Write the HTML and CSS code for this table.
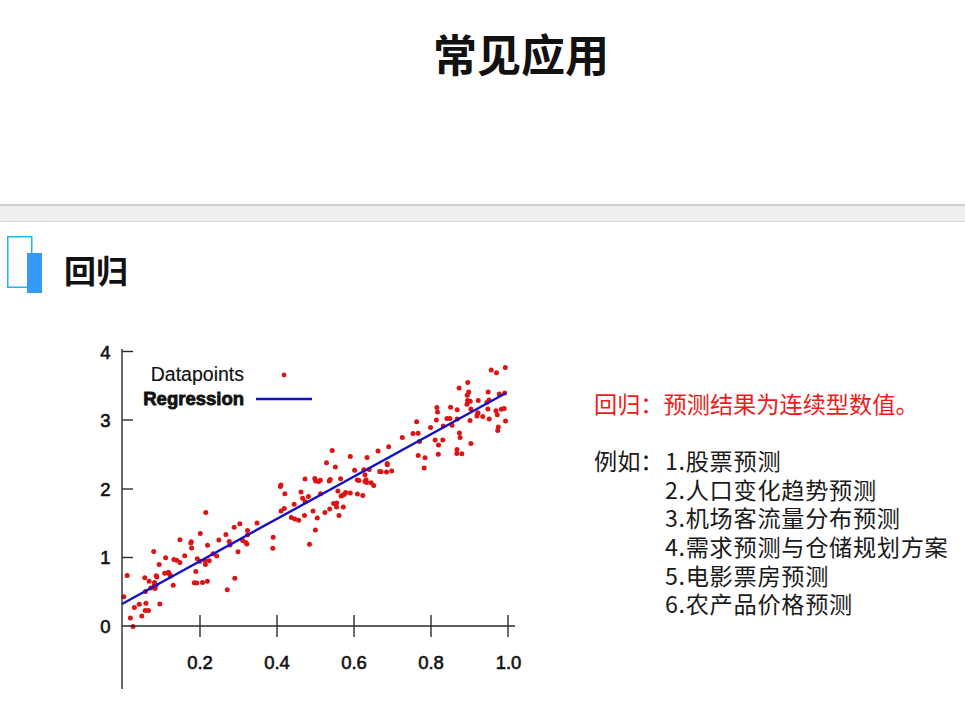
FILE: index.html
```html
<!DOCTYPE html>
<html lang="zh-CN">
<head>
<meta charset="utf-8">
<title>常见应用</title>
<link rel="stylesheet" href="styles.css">
</head>
<body>
<header class="top">
  <h1 class="title">常见应用</h1>
</header>
<div class="band"></div>
<main class="content">
  <div class="section-head">
    <svg class="sec-icon" width="40" height="62" viewBox="0 0 40 62">
      <rect x="2.75" y="2.75" width="24" height="50.5" fill="none" stroke="#22b4e6" stroke-width="1.5"/>
      <rect x="22" y="19" width="15" height="40" fill="#3399fb"/>
    </svg>
    <h2 class="sec-title">回归</h2>
  </div>
  <div class="row">
    <svg class="chart" width="450" height="370" viewBox="90 330 450 370">
      <g id="pts" fill="#dc1414"></g>
      <line x1="122" y1="604" x2="506" y2="393" stroke="#1212c4" stroke-width="2.4"/>
      <g stroke="#2a2a2a" stroke-width="1.4">
        <line x1="122" y1="349" x2="122" y2="689"/>
        <line x1="122" y1="626" x2="515" y2="626"/>
        <line x1="122" y1="351.5" x2="133" y2="351.5"/>
        <line x1="122" y1="420" x2="133" y2="420"/>
        <line x1="122" y1="489" x2="133" y2="489"/>
        <line x1="122" y1="557.5" x2="133" y2="557.5"/>
        <line x1="200" y1="615" x2="200" y2="637"/>
        <line x1="277" y1="615" x2="277" y2="637"/>
        <line x1="354" y1="615" x2="354" y2="637"/>
        <line x1="431" y1="615" x2="431" y2="637"/>
        <line x1="508" y1="615" x2="508" y2="637"/>
      </g>
      <g class="tick" text-anchor="middle">
        <text x="105.5" y="359">4</text>
        <text x="105.5" y="426.5">3</text>
        <text x="105.5" y="495.5">2</text>
        <text x="105.5" y="564">1</text>
        <text x="105.5" y="633">0</text>
        <text x="200" y="668.5">0.2</text>
        <text x="277" y="668.5">0.4</text>
        <text x="354" y="668.5">0.6</text>
        <text x="431" y="668.5">0.8</text>
        <text x="508.5" y="668.5">1.0</text>
      </g>
      <text class="legend" x="244" y="381" text-anchor="end">Datapoints</text>
      <text class="legend bold" x="244" y="405" text-anchor="end">Regression</text>
      <circle cx="284" cy="375" r="2.4" fill="#dc1414"/>
      <line x1="256" y1="399" x2="312" y2="399" stroke="#1212c4" stroke-width="2.4"/>
    </svg>
    <div class="desc">
      <p class="lead">回归：预测结果为连续型数值。</p>
      <div class="examples">
        <span class="ex-label">例如：</span>
        <ol class="ex-list">
          <li>1.股票预测</li>
          <li>2.人口变化趋势预测</li>
          <li>3.机场客流量分布预测</li>
          <li>4.需求预测与仓储规划方案</li>
          <li>5.电影票房预测</li>
          <li>6.农产品价格预测</li>
        </ol>
      </div>
    </div>
  </div>
</main>
<script src="script.js"></script>
</body>
</html>
```

FILE: styles.css
```css
html, body {
  margin: 0;
  padding: 0;
  background: #ffffff;
  width: 965px;
  height: 728px;
  overflow: hidden;
}

body {
  font-family: "Noto Sans CJK SC", "Noto Sans", sans-serif;
  color: #1a1a1a;
}

.top {
  height: 204px;
  box-sizing: border-box;
  padding: 25px 0 0 77px;
}

.title {
  margin: 0;
  font-size: 44px;
  line-height: 56px;
  font-weight: 700;
  text-align: center;
  color: #111;
}

.band {
  height: 15px;
  background: #efefef;
  border-top: 2px solid #cfcfcf;
  border-bottom: 1px solid #dadada;
}

.content {
  display: flex;
  flex-direction: column;
}

.section-head {
  display: flex;
  align-items: flex-start;
  padding: 12px 0 0 5px;
}

.sec-icon {
  display: block;
  flex: none;
}

.sec-title {
  margin: 15px 0 0 19px;
  font-size: 32px;
  line-height: 40px;
  font-weight: 700;
  color: #111;
}

.row {
  display: flex;
  align-items: flex-start;
  margin-top: 34px;
}

.chart {
  display: block;
  flex: none;
  margin-left: 90px;
}

.tick {
  font-family: "Liberation Sans", Arial, sans-serif;
  font-size: 18.5px;
  fill: #111;
  stroke: #111;
  stroke-width: 0.6;
}

.legend {
  font-family: "Liberation Sans", Arial, sans-serif;
  font-size: 19.5px;
  fill: #111;
  stroke: #111;
  stroke-width: 0.15;
}

.legend.bold {
  font-size: 18.5px;
  font-weight: 700;
  stroke: #111;
  stroke-width: 0.8;
}

.desc {
  margin: 59px 0 0 54px;
  font-size: 23.2px;
  line-height: 28.6px;
}

.lead {
  margin: 0 0 28.6px 0;
  color: #ee1a1a;
}

.examples {
  display: flex;
  align-items: flex-start;
}

.ex-label {
  flex: none;
  width: 71px;
}

.ex-list {
  list-style: none;
  margin: 0;
  padding: 0;
  letter-spacing: 0.7px;
}

.ex-list li {
  margin: 0;
  white-space: nowrap;
}
```

FILE: script.js
```js
(function () {
  var seed = 20240611;
  function rnd() {
    seed |= 0; seed = seed + 0x6D2B79F5 | 0;
    var t = Math.imul(seed ^ seed >>> 15, 1 | seed);
    t = t + Math.imul(t ^ t >>> 7, 61 | t) ^ t;
    return ((t ^ t >>> 14) >>> 0) / 4294967296;
  }
  function gauss() {
    var u = rnd() || 1e-9, v = rnd();
    return Math.sqrt(-2 * Math.log(u)) * Math.cos(2 * Math.PI * v);
  }
  var g = document.getElementById('pts');
  var ns = 'http://www.w3.org/2000/svg';
  for (var i = 0; i < 195; i++) {
    var x = rnd();
    var y = 0.32 + 3.07 * x + gauss() * 0.23;
    if (y < -0.02) y = -0.02;
    var px = 123 + 385 * x;
    var py = 626 - 68.75 * y;
    var c = document.createElementNS(ns, 'circle');
    c.setAttribute('cx', px.toFixed(1));
    c.setAttribute('cy', py.toFixed(1));
    c.setAttribute('r', '2.5');
    g.appendChild(c);
  }
})();
```
